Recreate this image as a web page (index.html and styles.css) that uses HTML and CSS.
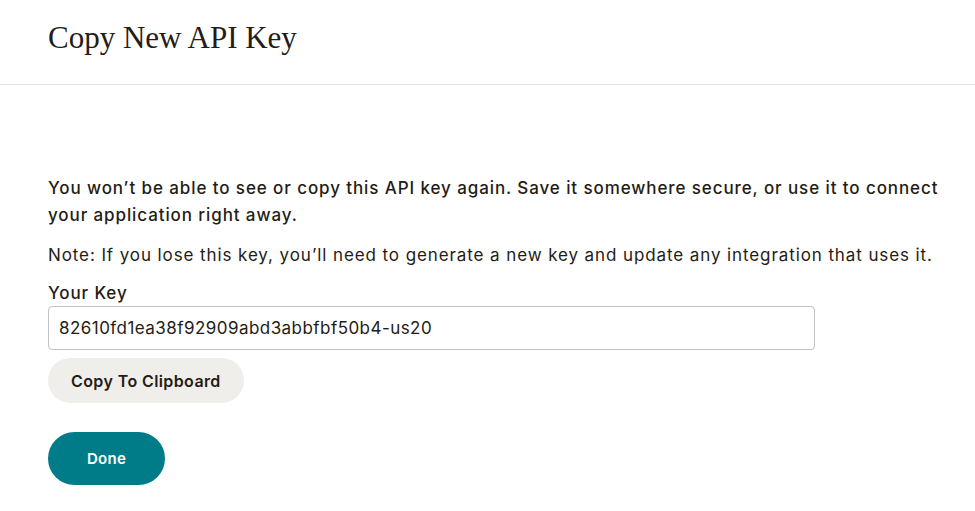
FILE: index.html
```html
<!DOCTYPE html>
<html>
<head>
<meta charset="utf-8">
<link rel="stylesheet" href="styles.css">
</head>
<body>
<header class="header">
  <h1 class="title">Copy New API Key</h1>
</header>
<main class="content">
  <p class="lead">You won’t be able to see or copy this API key again. Save it somewhere secure, or use it to connect your application right away.</p>
  <p class="note">Note: If you lose this key, you’ll need to generate a new key and update any integration that uses it.</p>
  <label class="label" for="key">Your Key</label>
  <input class="key-input" id="key" type="text" value="82610fd1ea38f92909abd3abbfbf50b4-us20" readonly>
  <button class="btn btn-copy">Copy To Clipboard</button>
  <button class="btn btn-done">Done</button>
</main>
</body>
</html>
```
FILE: styles.css
```css
* { box-sizing: border-box; }
html, body { margin: 0; padding: 0; background: #fff; }
body {
  font-family: Inter, "Open Sans", sans-serif;
  color: #241c15;
  width: 975px;
  height: 511px;
  overflow: hidden;
}
.header {
  height: 85px;
  border-bottom: 1px solid #e2e2e2;
  padding: 20px 48px 0;
}
.title {
  margin: 0;
  font-family: "Liberation Serif", serif;
  font-weight: 400;
  font-size: 31px;
  line-height: 36px;
}
.content {
  padding: 90px 16px 0 48px;
  display: flex;
  flex-direction: column;
  align-items: flex-start;
}
.lead {
  margin: 0;
  font-size: 17px;
  font-weight: 500;
  line-height: 27px;
  letter-spacing: 0.9px;
}
.note {
  margin: 13px 0 0;
  font-size: 17px;
  line-height: 27px;
  letter-spacing: 0.9px;
}
.label {
  margin-top: 12px;
  font-size: 17px;
  font-weight: 500;
  line-height: 24px;
  letter-spacing: 0.9px;
}
.key-input {
  margin-top: 1px;
  width: 767px;
  height: 44px;
  border: 1px solid #c3c3c3;
  border-radius: 4px;
  padding: 0 10px;
  font-family: inherit;
  font-size: 17px;
  letter-spacing: 0.45px;
  color: #241c15;
  outline: none;
}
.btn {
  border: none;
  border-radius: 999px;
  font-family: inherit;
  font-weight: 600;
  cursor: pointer;
}
.btn-copy {
  margin-top: 8px;
  height: 45px;
  padding: 0 23px;
  background: #efeeea;
  color: #241c15;
  font-size: 16px;
  letter-spacing: 0.4px;
}
.btn-done {
  margin-top: 29px;
  height: 53px;
  width: 117px;
  background: #007c89;
  color: #fff;
  font-size: 15px;
  letter-spacing: 0.3px;
}
```
